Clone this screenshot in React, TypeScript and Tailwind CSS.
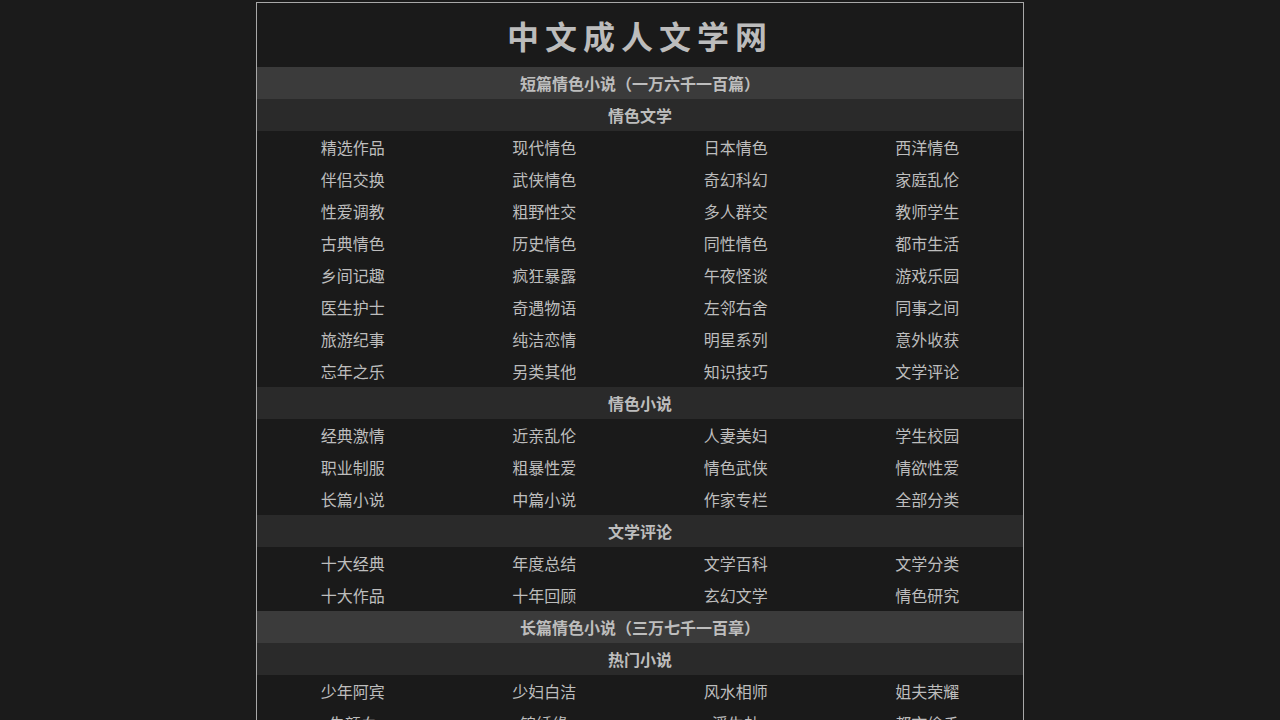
const sections = [
  {
    title: '短篇情色小说（一万六千一百篇）',
    groups: [
      {
        name: '情色文学',
        items: [
          '精选作品', '现代情色', '日本情色', '西洋情色',
          '伴侣交换', '武侠情色', '奇幻科幻', '家庭乱伦',
          '性爱调教', '粗野性交', '多人群交', '教师学生',
          '古典情色', '历史情色', '同性情色', '都市生活',
          '乡间记趣', '疯狂暴露', '午夜怪谈', '游戏乐园',
          '医生护士', '奇遇物语', '左邻右舍', '同事之间',
          '旅游纪事', '纯洁恋情', '明星系列', '意外收获',
          '忘年之乐', '另类其他', '知识技巧', '文学评论',
        ],
      },
      {
        name: '情色小说',
        items: [
          '经典激情', '近亲乱伦', '人妻美妇', '学生校园',
          '职业制服', '粗暴性爱', '情色武侠', '情欲性爱',
          '长篇小说', '中篇小说', '作家专栏', '全部分类',
        ],
      },
      {
        name: '文学评论',
        items: [
          '十大经典', '年度总结', '文学百科', '文学分类',
          '十大作品', '十年回顾', '玄幻文学', '情色研究',
        ],
      },
    ],
  },
  {
    title: '长篇情色小说（三万七千一百章）',
    groups: [
      {
        name: '热门小说',
        items: [
          '少年阿宾', '少妇白洁', '风水相师', '姐夫荣耀',
          '朱颜血', '锦绣缘', '浮生劫', '都市偷香',
        ],
      },
    ],
  },
];

export default function App() {
  return (
    <div
      className="min-h-screen bg-[#1b1b1b] pt-[2px] text-[#bdbdbd]"
      style={{ fontFamily: '"Noto Sans CJK SC", "Noto Sans", sans-serif' }}
    >
      <div className="mx-auto w-[768px] border border-[#a8a8a8] bg-[#1a1a1a]">
        {/* Title */}
        <div className="flex h-[64px] items-center justify-center">
          <h1 className="text-[32px] font-bold tracking-[6px] text-[#bcbcbc]">
            中文成人文学网
          </h1>
        </div>

        {sections.map((section) => (
          <div key={section.title}>
            <div className="flex h-[32px] items-center justify-center bg-[#3b3b3b] text-[16px] font-bold">
              {section.title}
            </div>
            {section.groups.map((group) => (
              <div key={group.name}>
                <div className="flex h-[32px] items-center justify-center bg-[#2a2a2a] text-[16px] font-bold">
                  {group.name}
                </div>
                <div className="grid grid-cols-4">
                  {group.items.map((item) => (
                    <a
                      key={item}
                      href="#"
                      className="flex h-[32px] items-center justify-center text-[16px] text-[#bdbdbd] hover:text-white"
                    >
                      {item}
                    </a>
                  ))}
                </div>
              </div>
            ))}
          </div>
        ))}
      </div>
    </div>
  );
}
